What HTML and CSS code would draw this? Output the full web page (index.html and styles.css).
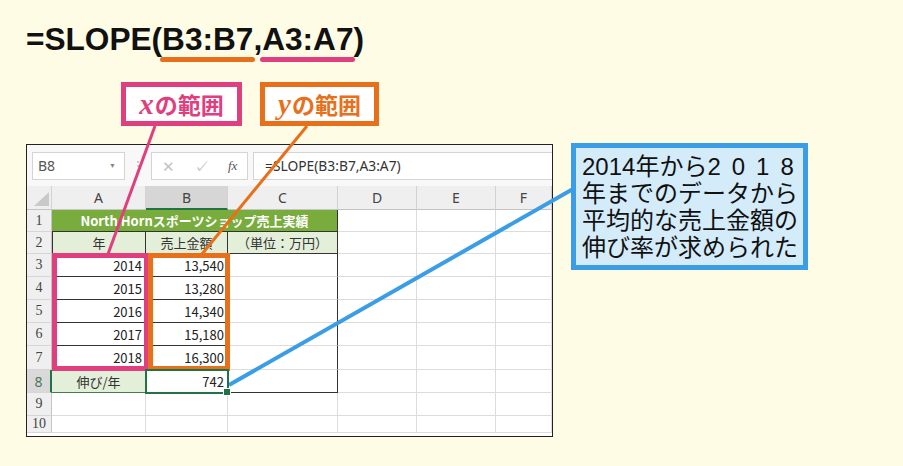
FILE: index.html
```html
<!DOCTYPE html>
<html lang="ja">
<head>
  <meta charset="UTF-8">
  <title>SLOPE関数</title>
  <link rel="stylesheet" href="styles.css">
</head>
<body>

  <div class="page">
    <h1 class="formula">=SLOPE(<span class="range range-y">B3:B7</span>,<span class="range range-x">A3:A7</span>)</h1>

    <div class="labels">
      <div class="label label-x"><i>x</i>の範囲</div>
      <div class="label label-y"><i>y</i>の範囲</div>
    </div>

    <div class="main">
      <div class="excel">
        <div class="toolbar">
          <div class="namebox"><span>B8</span><span class="drop">▼</span></div>
          <div class="grip">⋮</div>
          <div class="btns">
            <span class="ico">✕</span>
            <span class="ico">✓</span>
            <span class="fx">fx</span>
          </div>
          <div class="fbar">=SLOPE(B3:B7,A3:A7)</div>
        </div>

        <div class="grid">
          <!-- column heads -->
          <div class="ch corner"></div>
          <div class="ch">A</div>
          <div class="ch sel">B</div>
          <div class="ch">C</div>
          <div class="ch">D</div>
          <div class="ch">E</div>
          <div class="ch">F</div>

          <!-- 1 -->
          <div class="rh">1</div>
          <div class="c title">North Hornスポーツショップ売上実績</div>
          <div class="c"></div><div class="c"></div><div class="c"></div>

          <!-- 2 -->
          <div class="rh">2</div>
          <div class="c t head first">年</div>
          <div class="c t head">売上金額</div>
          <div class="c t head">（単位：万円）</div>
          <div class="c"></div><div class="c"></div><div class="c"></div>

          <!-- 3 -->
          <div class="rh">3</div>
          <div class="c t num first">2014</div>
          <div class="c t num">13,540</div>
          <div class="c edge"></div>
          <div class="c"></div><div class="c"></div><div class="c"></div>

          <!-- 4 -->
          <div class="rh">4</div>
          <div class="c t num first">2015</div>
          <div class="c t num">13,280</div>
          <div class="c edge"></div>
          <div class="c"></div><div class="c"></div><div class="c"></div>

          <!-- 5 -->
          <div class="rh">5</div>
          <div class="c t num first">2016</div>
          <div class="c t num">14,340</div>
          <div class="c edge"></div>
          <div class="c"></div><div class="c"></div><div class="c"></div>

          <!-- 6 -->
          <div class="rh">6</div>
          <div class="c t num first">2017</div>
          <div class="c t num">15,180</div>
          <div class="c edge"></div>
          <div class="c"></div><div class="c"></div><div class="c"></div>

          <!-- 7 -->
          <div class="rh">7</div>
          <div class="c t num first">2018</div>
          <div class="c t num">16,300</div>
          <div class="c edge"></div>
          <div class="c"></div><div class="c"></div><div class="c"></div>

          <!-- 8 -->
          <div class="rh rsel">8</div>
          <div class="c t head growth">伸び/年</div>
          <div class="c t num active">742</div>
          <div class="c t"></div>
          <div class="c"></div><div class="c"></div><div class="c"></div>

          <!-- 9 -->
          <div class="rh">9</div>
          <div class="c"></div><div class="c"></div><div class="c"></div>
          <div class="c"></div><div class="c"></div><div class="c"></div>

          <!-- 10 -->
          <div class="rh">10</div>
          <div class="c"></div><div class="c"></div><div class="c"></div>
          <div class="c"></div><div class="c"></div><div class="c"></div>
        </div>
      </div>

      <div class="callout">
        <p>2014年から<span class="wide">2018</span></p>
        <p>年までのデータから</p>
        <p>平均的な売上金額の</p>
        <p>伸び率が求められた</p>
      </div>
    </div>
  </div>

  <!-- range marks and leader lines drawn over the sheet -->
  <svg class="marks" width="903" height="466" viewBox="0 0 903 466">
    <rect x="54.5" y="255.5" width="92" height="113" fill="none" stroke="#e03f7f" stroke-width="5"/>
    <rect x="150.5" y="255.5" width="77" height="113" fill="none" stroke="#e8701b" stroke-width="5"/>
    <line x1="155" y1="126" x2="108" y2="254" stroke="#e03f7f" stroke-width="3"/>
    <line x1="307" y1="126" x2="202" y2="254" stroke="#e8701b" stroke-width="3"/>
    <line x1="229" y1="385" x2="573" y2="189" stroke="#3a9de5" stroke-width="4"/>
  </svg>

</body>
</html>
```

FILE: styles.css
```css
* {
  box-sizing: border-box;
}

body {
  margin: 0;
  width: 903px;
  height: 466px;
  overflow: hidden;
  position: relative;
  background: #fefce4;
  font-family: "Noto Sans CJK JP", sans-serif;
  color: #222;
}

.page {
  padding: 21px 0 0 26px;
}

/* big formula */
.formula {
  margin: 0;
  font: bold 31.6px/36px "Liberation Sans", Arial, sans-serif;
  color: #111;
}

.range {
  position: relative;
}

.range::after {
  content: "";
  position: absolute;
  left: -2px;
  right: -2px;
  bottom: -5px;
  height: 5px;
  border-radius: 3px;
}

.range-y::after {
  background: #e8701b;
}

.range-x::after {
  background: #e03f7f;
}

/* x / y labels */
.labels {
  display: flex;
  gap: 18px;
  margin: 25px 0 0 95px;
}

.label {
  height: 44px;
  display: flex;
  align-items: center;
  justify-content: center;
  background: #fff;
  border: 5px solid;
  font-size: 23px;
  font-weight: bold;
}

.label i {
  font-family: "Liberation Serif", serif;
  font-size: 29px;
  font-weight: bold;
  margin-right: 1px;
}

.label-x {
  width: 121px;
  color: #e03f7f;
  border-color: #e03f7f;
}

.label-y {
  width: 119px;
  color: #e8701b;
  border-color: #e8701b;
}

.main {
  display: flex;
  align-items: flex-start;
  gap: 18px;
  margin-top: 18px;
}

/* excel window */
.excel {
  width: 527px;
  height: 293px;
  border: 1px solid #222;
  background: #fff;
}

.toolbar {
  height: 41px;
  display: flex;
  align-items: center;
  padding-left: 5px;
  background: #f8f8f8;
  font-family: "Noto Sans", sans-serif;
}

.namebox {
  width: 93px;
  height: 28px;
  display: flex;
  align-items: center;
  justify-content: space-between;
  padding: 0 8px 0 5px;
  background: #fff;
  border: 1px solid #d4d4d4;
  font-size: 14px;
  color: #555;
}

.drop {
  font-size: 7px;
  color: #888;
}

.grip {
  width: 26px;
  text-align: center;
  color: #bdbdbd;
  font-size: 14px;
}

.btns {
  width: 97px;
  height: 28px;
  display: flex;
  align-items: center;
  padding-left: 10px;
  background: #fff;
  border: 1px solid #d4d4d4;
}

.ico {
  width: 32px;
  font-size: 15px;
  color: #c2c2c2;
}

.fx {
  margin-left: 2px;
  font: italic 13px "Liberation Serif", serif;
  color: #555;
}

.fbar {
  flex: 1;
  height: 28px;
  margin-left: 5px;
  display: flex;
  align-items: center;
  padding-left: 11px;
  background: #fff;
  border: 1px solid #d4d4d4;
  border-right: none;
  font-size: 13.8px;
  color: #333;
}

/* cells */
.grid {
  display: grid;
  grid-template-columns: 25px 94px 82px 110px 79px 79px 1fr;
  grid-template-rows: 24px 22px 22px 23px 23px 23px 23px 24px 23px 23px 1fr;
}

.ch,
.rh,
.c {
  display: flex;
  align-items: center;
  white-space: nowrap;
}

.ch {
  justify-content: center;
  background: #efefef;
  border-right: 1px solid #d2d2d2;
  border-bottom: 1px solid #c4c4c4;
  font: 14px "Noto Sans", sans-serif;
  color: #444;
}

.ch.sel {
  background: #d6d6d6;
  border-bottom: 2px solid #217346;
}

.corner {
  position: relative;
}

.corner::after {
  content: "";
  position: absolute;
  right: 2px;
  bottom: 3px;
  border-left: 15px solid transparent;
  border-bottom: 14px solid #c9c9c9;
}

.rh {
  justify-content: center;
  background: #efefef;
  border-right: 1px solid #c4c4c4;
  border-bottom: 1px solid #d6d6d6;
  font: 14px "Liberation Serif", serif;
  color: #444;
}

.rh.rsel {
  background: #d9d9d9;
  border-right: 2px solid #217346;
  color: #4b7a5a;
  font-family: "Noto Sans", sans-serif;
}

.c {
  padding: 0 3px;
  border-right: 1px solid #dcdcdc;
  border-bottom: 1px solid #dcdcdc;
  font-size: 13px;
}

.title {
  grid-column: span 3;
  justify-content: center;
  background: #78ad3e;
  color: #fff;
  font-weight: bold;
  border-right: 1px solid #333;
  border-bottom: 1px solid #333;
}

.t {
  border-right: 1px solid #333;
  border-bottom: 1px solid #333;
}

.first {
  border-left: 1px solid #333;
}

.edge {
  border-right: 1px solid #333;
}

.head {
  justify-content: center;
  background: #e3efd9;
  color: #333;
}

.num {
  justify-content: flex-end;
}

.growth {
  border-bottom: 1px solid #3f7d4f;
}

.active {
  position: relative;
  z-index: 1;
  outline: 2px solid #217346;
  outline-offset: -1px;
}

.active::after {
  content: "";
  position: absolute;
  right: -4px;
  bottom: -4px;
  width: 6px;
  height: 6px;
  background: #217346;
  border: 1px solid #fff;
}

/* note box */
.callout {
  width: 237px;
  height: 127px;
  margin-top: -1px;
  padding: 5px 0 0 6px;
  background: #d4ebfa;
  border: 5px solid #3a9de5;
  font-family: "Liberation Sans", "Noto Sans CJK JP", sans-serif;
  font-size: 24px;
  line-height: 27px;
  color: #111;
}

.callout p {
  margin: 0;
  height: 27px;
  white-space: nowrap;
}

.wide {
  letter-spacing: 11px;
}

.marks {
  position: absolute;
  left: 0;
  top: 0;
  pointer-events: none;
}
```
